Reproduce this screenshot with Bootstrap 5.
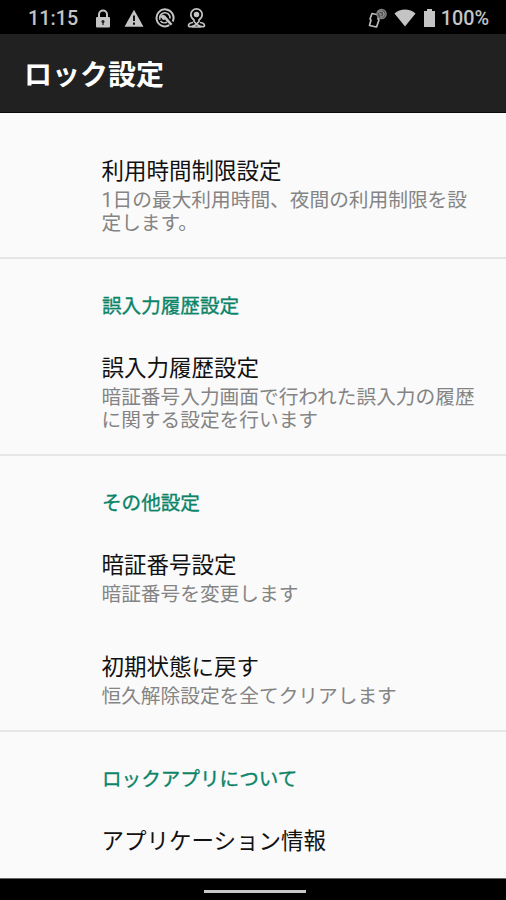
<!DOCTYPE html>
<html lang="ja">
<head>
<meta charset="utf-8">
<meta name="viewport" content="width=device-width, initial-scale=1">
<title>ロック設定</title>
<link href="https://cdn.jsdelivr.net/npm/bootstrap@5.3.0/dist/css/bootstrap.min.css" rel="stylesheet">
<style>
body{font-family:Roboto,"Noto Sans CJK JP",sans-serif;background:#fafafa;color:#111;letter-spacing:0}
.phone{height:900px}
.status{height:34px;background:#000;color:#c4c4c4;font-size:19.8px;font-weight:500;line-height:34px;padding:3px 17px 0 28px}
.status svg{display:block;flex:none}
.clock{width:67px}
.appbar{height:79px;background:#212121;color:#fff;padding:6px 0 0 24px;border-bottom:1px solid #0c0c0c}
.appbar h1{font-size:28px;font-weight:700;line-height:40px}
.prefs{padding-top:20px}
.group+.group{border-top:2px solid #e6e6e6;margin-top:-1px;margin-bottom:-1px}
.group h2{font-size:19.6px;font-weight:400;line-height:23px;color:#0b8468;-webkit-text-stroke:.35px #0b8468;margin:0;padding:36px 24px 12px 102px}
.pref{padding:24px 24px 23px 101.500px}
.pref h3{font-size:22.5px;font-weight:400;line-height:28px;margin:0}
.pref p{font-size:19.7px;line-height:23px;color:#848484;margin:4px 0 0;white-space:nowrap}
.gesture{height:22px;background:#000;border-top:1px solid #666;padding:4px 0 0 4px}
.pill{width:102px;height:3px;background:#c8c8c8}
</style>
<script src="https://cdn.jsdelivr.net/npm/bootstrap@5.3.0/dist/js/bootstrap.bundle.min.js"></script>
</head>
<body>
<div class="phone d-flex flex-column overflow-hidden">
  <div class="status d-flex align-items-center flex-shrink-0">
    <span class="clock">11:15</span>
    <svg width="16" height="20" viewBox="0 0 16 20"><path d="M4 8V5.500a4 4 0 0 1 8 0V8" fill="none" stroke="#c4c4c4" stroke-width="2"/><rect x="1" y="8" width="14" height="10.500" rx="1" fill="#c4c4c4"/><circle cx="8" cy="12.500" r="1.500" fill="#222"/><path d="M8 13v3" stroke="#222" stroke-width="1.300"/></svg>
    <svg class="ms-2" width="30" height="20" viewBox="0 0 30 20"><path d="M15 .8 24.500 17.800H5.500z" fill="#c4c4c4"/><path d="M15 6.500v5.500M15 13.500v2.200" stroke="#111" stroke-width="2"/></svg>
    <svg class="ms-1 me-2" width="24" height="22" viewBox="-2 0 24 22"><path d="M14.300 17.200A8.500 8.500 0 1 1 17.700 13.500" fill="none" stroke="#c4c4c4" stroke-width="2"/><path d="M5 11.800A5.200 5.200 0 1 1 15 10.500M5.500 13c2 2.500 5 2 6.500 1" fill="none" stroke="#c4c4c4" stroke-width="1.600"/><path d="m4.500 9 3-2.500 2.500 1L17.500 16l-2 1.500-5.500-6-2 .5-1.500-2z" fill="#c4c4c4"/></svg>
    <svg width="24" height="22" viewBox="0 0 24 22"><g fill="none" stroke="#c4c4c4" stroke-width="1.700"><path d="M9 13.500V12C7 10.500 5.800 8.700 5.800 6.600a5.700 5.700 0 0 1 11.400 0c0 2.100-1.200 3.900-3.200 5.400v1.500L11.500 16z"/><circle cx="11.500" cy="6.500" r="1.900" fill="#c4c4c4"/><path d="M8 14.500c-2 .3-4.500 1.500-4.500 3 0 1 1.500 1.500 3.500 1l4.500-2 4.500 2c2 .5 3.500 0 3.500-1 0-1.500-2.500-2.700-4.500-3M7 19h9"/></g></svg>
    <svg class="ms-auto" width="22" height="22" viewBox="1.500 0 22 22"><path d="m6.500 5.500 7 1.500-1 4 1 1-2.500 7-7-1.500L5.500 12l-1-1z" fill="none" stroke="#bbb" stroke-width="1.700" stroke-linejoin="round"/><circle cx="16" cy="6" r="4.600" fill="#555" stroke="#858585" stroke-width="1.400"/><path d="M12.500 4.500c2-2.500 6-1.500 6 1.500s-2.500 3.500-4 2.500M13.500 6c2-.8 3 .5 1.500 1.500" fill="none" stroke="#aaa" stroke-width="1"/></svg>
    <svg width="34" height="20" viewBox="0 0 34 20"><path d="M5.500 4.500C11-.7 21-.7 26.500 4.500L16 17.500z" fill="#c4c4c4"/></svg>
    <svg width="14" height="20" viewBox="0 0 14 20"><path d="M1 2h3V0h5v2h3v16H1z" fill="#c4c4c4"/></svg>
    <span class="ms-1">100%</span>
  </div>
  <header class="appbar d-flex align-items-center flex-shrink-0"><h1 class="m-0">ロック設定</h1></header>
  <main class="prefs flex-grow-1 overflow-hidden">
    <section class="group">
      <div class="pref"><h3>利用時間制限設定</h3><p>1日の最大利用時間、夜間の利用制限を設<br>定します。</p></div>
    </section>
    <section class="group">
      <h2>誤入力履歴設定</h2>
      <div class="pref"><h3>誤入力履歴設定</h3><p>暗証番号入力画面で行われた誤入力の履歴<br>に関する設定を行います</p></div>
    </section>
    <section class="group">
      <h2>その他設定</h2>
      <div class="pref"><h3>暗証番号設定</h3><p>暗証番号を変更します</p></div>
      <div class="pref"><h3>初期状態に戻す</h3><p>恒久解除設定を全てクリアします</p></div>
    </section>
    <section class="group">
      <h2>ロックアプリについて</h2>
      <div class="pref"><h3>アプリケーション情報</h3></div>
    </section>
  </main>
  <footer class="gesture d-flex justify-content-center align-items-center flex-shrink-0"><div class="pill"></div></footer>
</div>
</body>
</html>
